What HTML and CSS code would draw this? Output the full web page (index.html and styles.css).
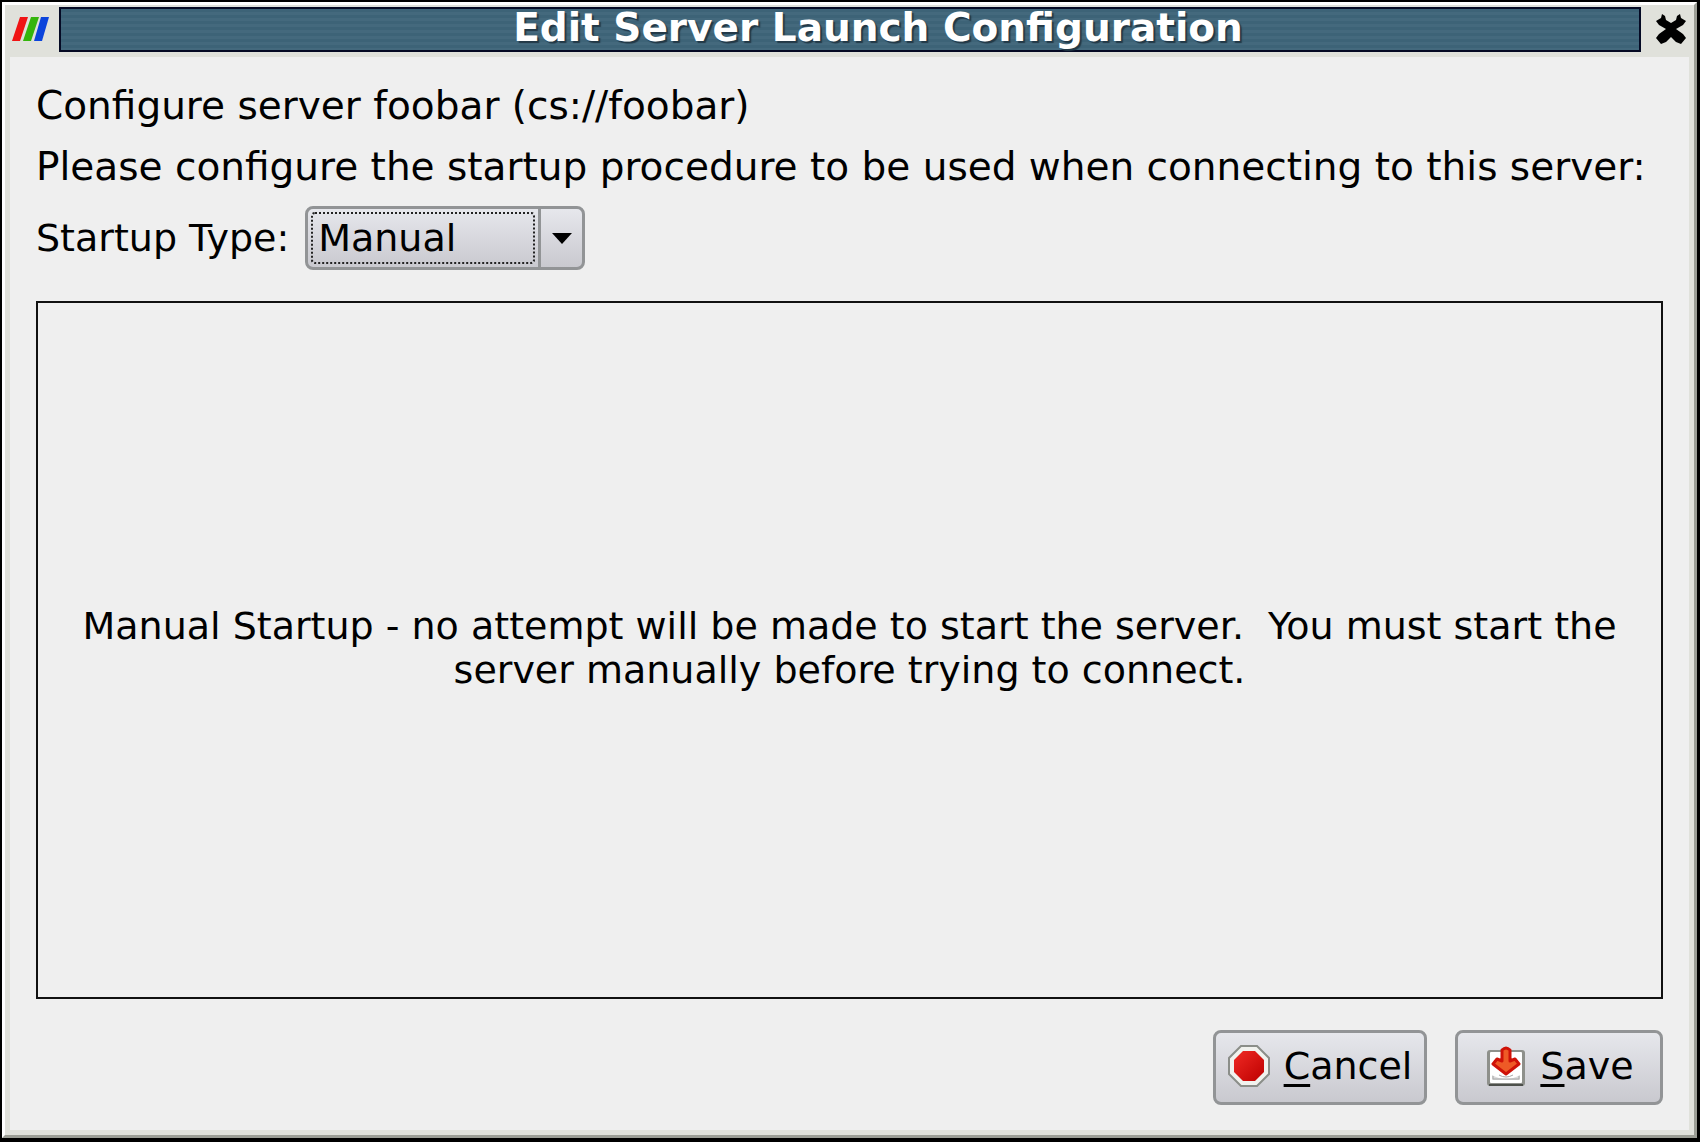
FILE: index.html
```html
<!DOCTYPE html>
<html lang="en">
<head>
<meta charset="utf-8">
<title>Edit Server Launch Configuration</title>
<link rel="stylesheet" href="styles.css">
</head>
<body>
<div class="window">
  <div class="frame">
    <header class="titlebar">
      <svg class="app-icon" viewBox="0 0 40 26" aria-hidden="true">
        <path fill="#f01414" d="M10 1h8l-8 24H2z"/>
        <path fill="#35b50c" d="M21 1h8l-8 24h-8z"/>
        <path fill="#0b44dc" d="M31 1h8l-7 24h-8z"/>
      </svg>
      <h1 class="title">Edit Server Launch Configuration</h1>
      <button class="close" type="button" aria-label="Close">
        <svg class="close-icon" viewBox="0 0 32 32" aria-hidden="true">
          <path d="M7 1l3 2 1 4 5 3 5-3 1-4 3-2 1 4 5 3-3 4-7 4 7 5 3 4-5 6-5-2-5-5-5 5-5 2-5-6 3-4 7-5-7-4-3-4 5-3z"/>
        </svg>
      </button>
    </header>
    <main class="content">
      <p class="line">Configure server foobar (cs://foobar)</p>
      <p class="line">Please configure the startup procedure to be used when connecting to this server:</p>
      <div class="field">
        <label for="startup-type">Startup Type:</label>
        <div class="combo">
          <select id="startup-type" class="combo-select">
            <option>Manual</option>
            <option>Command</option>
          </select>
          <span class="combo-arrow"><svg width="20" height="11" viewBox="0 0 20 11" aria-hidden="true"><path d="M0 0h20L10 11z"/></svg></span>
        </div>
      </div>
      <section class="panel">
        <p class="message">Manual Startup - no attempt will be made to start the server.&nbsp; You must start the server manually before trying to connect.</p>
      </section>
      <footer class="actions">
        <button class="button cancel" type="button">
          <svg class="button-icon" viewBox="0 0 42 42" aria-hidden="true">
            <defs><linearGradient id="stop" x1="0" y1="0" x2="1" y2="1"><stop offset="0" stop-color="#f02a24"/><stop offset="1" stop-color="#bd0000"/></linearGradient></defs>
            <path d="M13 1h16l12 12v16L29 41H13L1 29V13z" fill="#f1f2ee" stroke="#8b8e89" stroke-width="2"/>
            <path d="M15 6h12l9 9v12l-9 9H15l-9-9V15z" fill="url(#stop)"/>
          </svg>
          <span><span class="key">C</span>ancel</span>
        </button>
        <button class="button save" type="button">
          <svg class="button-icon" viewBox="0 0 42 42" aria-hidden="true">
            <rect x="3" y="5" width="38" height="36" rx="3" fill="#8e908b"/>
            <path d="M5 39h34v2H5z" fill="#4d504b"/>
            <rect x="6" y="7" width="32" height="31" rx="1" fill="#fff"/>
            <path d="M8 30q14 8 28 0v5H8z" fill="#dcdcdc"/>
            <path d="M9 31v3h26v-3M15 30q7 4 14 0" fill="none" stroke="#a8a8a8" stroke-width="1"/>
            <path d="M18 5q4-4 8 0v11l5-2 4 5-13 10-13-10 4-5 5 2z" fill="#ee5a26" stroke="#cf1208" stroke-width="3" stroke-linejoin="round"/>
          </svg>
          <span><span class="key">S</span>ave</span>
        </button>
      </footer>
    </main>
  </div>
</div>
</body>
</html>
```
FILE: styles.css
```css
* {
  box-sizing: border-box;
}

body {
  margin: 0;
  background: #000;
  color: #000;
  font: 38px/44px "DejaVu Sans", sans-serif;
}

h1,
p {
  margin: 0;
}

.window {
  min-height: 100vh;
  display: flex;
  border: 2px solid #000;
  border-right-width: 3px;
  border-bottom-width: 4px;
}

.frame {
  flex: 1;
  display: flex;
  flex-direction: column;
  padding: 0 5px 5px;
  background: #e0e1db;
  border: 3px solid;
  border-color: #fff #9c9e96 #9c9e96 #fff;
}

.titlebar {
  display: flex;
  align-items: center;
  height: 52px;
  padding: 2px 0 6px;
}

.app-icon {
  width: 40px;
  height: 26px;
  margin-right: 9px;
}

.title {
  flex: 1;
  height: 45px;
  padding-left: 56px;
  border: 2px solid #050a24;
  background: repeating-linear-gradient(#3d6377 0 3px, #44697d 3px 6px);
  color: #fff;
  font-size: 39px;
  line-height: 38px;
  text-align: center;
  text-shadow: 2px 2px 1px #223846;
  white-space: nowrap;
}

.close {
  width: 48px;
  height: 44px;
  padding: 0 0 0 11px;
  border: 0;
  background: none;
}

.close-icon {
  display: block;
  width: 32px;
  height: 32px;
  margin: auto;
}

.content {
  flex: 1;
  display: flex;
  flex-direction: column;
  padding: 27px 26px 25px;
  background: #efefef;
}

.line {
  margin-bottom: 17px;
  font-size: 39px;
}

.field {
  display: flex;
  align-items: center;
  gap: 16px;
}

.combo,
.button {
  border: 3px solid #929496;
  border-radius: 8px;
  background: linear-gradient(#e6e7ec, #c9c9cf);
}

.combo {
  display: flex;
  width: 280px;
  height: 64px;
}

.combo-select {
  flex: 1;
  margin: 3px;
  padding: 0 0 0 5px;
  appearance: none;
  border: 2px dotted #222;
  border-radius: 4px;
  outline: 0;
  background: none;
  color: inherit;
  font: inherit;
}

.combo-arrow {
  display: grid;
  place-items: center;
  width: 44px;
  border-left: 3px solid #929496;
}

.panel {
  flex: 1;
  display: grid;
  place-items: center;
  margin: 31px 0;
  padding: 0 40px 4px;
  border: 2px solid #111;
}

.message {
  text-align: center;
}

.actions {
  display: flex;
  justify-content: flex-end;
  gap: 28px;
}

.button {
  display: flex;
  align-items: center;
  justify-content: center;
  gap: 14px;
  height: 75px;
  padding: 0 11px 4px;
  color: inherit;
  font: inherit;
}

.cancel {
  width: 214px;
}

.save {
  width: 208px;
}

.button-icon {
  flex: none;
  width: 42px;
  height: 42px;
}

.key {
  text-decoration: underline;
  text-decoration-thickness: 3px;
  text-underline-offset: 5px;
}
```
